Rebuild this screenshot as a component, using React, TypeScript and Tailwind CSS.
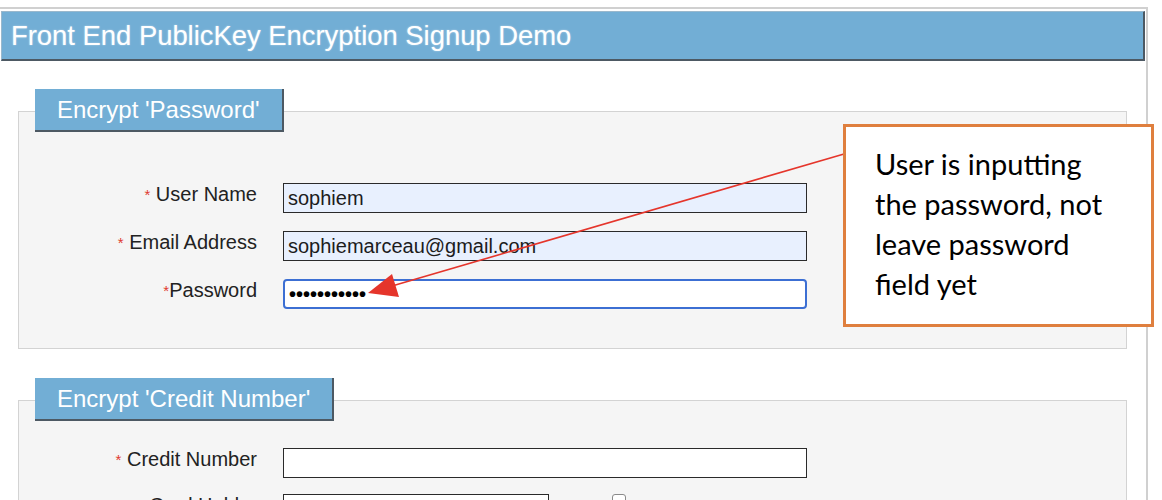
import React from 'react';

type Row = { label: string; value?: string; kind?: 'filled' | 'password' | 'empty'; tight?: boolean };

const passwordRows: Row[] = [
  { label: 'User Name', value: 'sophiem', kind: 'filled' },
  { label: 'Email Address', value: 'sophiemarceau@gmail.com', kind: 'filled' },
  { label: 'Password', value: '•••••••••••', kind: 'password', tight: true },
];

const Legend: React.FC<{ text: string }> = ({ text }) => (
  <div className="relative z-10 ml-[17px] inline-flex h-[43px] items-center bg-[#72aed5] border-r-2 border-b-2 border-[#4d5963] px-[22px] text-[24px] text-white">
    {text}
  </div>
);

const Label: React.FC<{ text: string; tight?: boolean }> = ({ text, tight }) => (
  <div className="w-[238px] shrink-0 text-right text-[20px] leading-[23px] text-[#222]">
    <span className="align-top text-[15px] text-[#e03a2f]">*</span>
    {tight ? '' : ' '}
    {text}
  </div>
);

const Field: React.FC<{ row: Row }> = ({ row }) => {
  if (row.kind === 'password') {
    return (
      <div className="flex h-[30px] w-[524px] items-center rounded-[4px] border-2 border-[#3c6fd3] bg-white pl-[4px] text-[20px] font-bold text-black">
        {row.value}
      </div>
    );
  }
  return (
    <div
      className={`flex h-[30px] w-[524px] items-center border-[1.5px] border-[#2a2a2a] pl-[4px] text-[20px] text-[#1c1c1c] ${
        row.kind === 'filled' ? 'bg-[#e8f0fe]' : 'bg-white'
      }`}
    >
      {row.value}
    </div>
  );
};

const App: React.FC = () => {
  return (
    <div className="relative h-[500px] w-[1162px] overflow-hidden bg-white font-['Liberation_Sans',Arial,sans-serif]">
      <div className="pt-[7px]">
        <div className="h-[493px] w-[1148px] border-t-2 border-r-2 border-[#d0d0d0] pt-[2px]">
          <div className="ml-[1px] flex h-[50px] w-[1144px] items-center border-t border-l border-[#9ab8cc] border-r-2 border-b-2 border-r-[#4d5963] border-b-[#4d5963] bg-[#72aed5] pl-[9px] text-[27.4px] text-white [text-shadow:0_0_2px_rgba(255,255,255,0.5)]">
            Front End PublicKey Encryption Signup Demo
          </div>

          <div className="pl-[18px] pt-[28px]">
            <Legend text="Encrypt 'Password'" />
            <div className="-mt-[21px] flex h-[238px] w-[1109px] flex-col gap-[18px] border border-[#d3d3d3] bg-[#f5f5f5] pt-[71px]">
              {passwordRows.map(row => (
                <div key={row.label} className="flex gap-[26px]">
                  <Label text={row.label} tight={row.tight} />
                  <Field row={row} />
                </div>
              ))}
            </div>

            <div className="pt-[29px]">
              <Legend text="Encrypt 'Credit Number'" />
              <div className="-mt-[21px] flex h-[200px] w-[1109px] flex-col gap-[16px] border border-[#d3d3d3] bg-[#f5f5f5] pt-[47px]">
                <div className="flex gap-[26px]">
                  <Label text="Credit Number" />
                  <Field row={{ label: 'Credit Number', kind: 'empty' }} />
                </div>
                <div className="flex items-start gap-[26px]">
                  <Label text="Card Holder" />
                  <div className="h-[30px] w-[266px] border-[1.5px] border-[#2a2a2a] bg-white" />
                  <div className="ml-[37px] h-[14px] w-[14px] rounded-[3px] border border-[#8a8a8a] bg-white" />
                </div>
              </div>
            </div>
          </div>
        </div>
      </div>

      {/* annotation arrow */}
      <svg className="pointer-events-none absolute left-0 top-0" width="1162" height="500" viewBox="0 0 1162 500">
        <line x1="844" y1="154" x2="392" y2="286" stroke="#e5352b" strokeWidth="1.6" />
        <polygon points="368,293 392,274 399,297" fill="#e5352b" />
      </svg>

      {/* callout */}
      <div className="absolute left-[843px] top-[124px] h-[203px] w-[311px] border-[3px] border-[#df7f3e] bg-white pl-[29px] pt-[17px] font-['Lato','Open_Sans',sans-serif] text-[29px] leading-[40px] text-black">
        User is inputting
        <br />
        the password, not
        <br />
        leave password
        <br />
        field yet
      </div>
    </div>
  );
};

export default App;
